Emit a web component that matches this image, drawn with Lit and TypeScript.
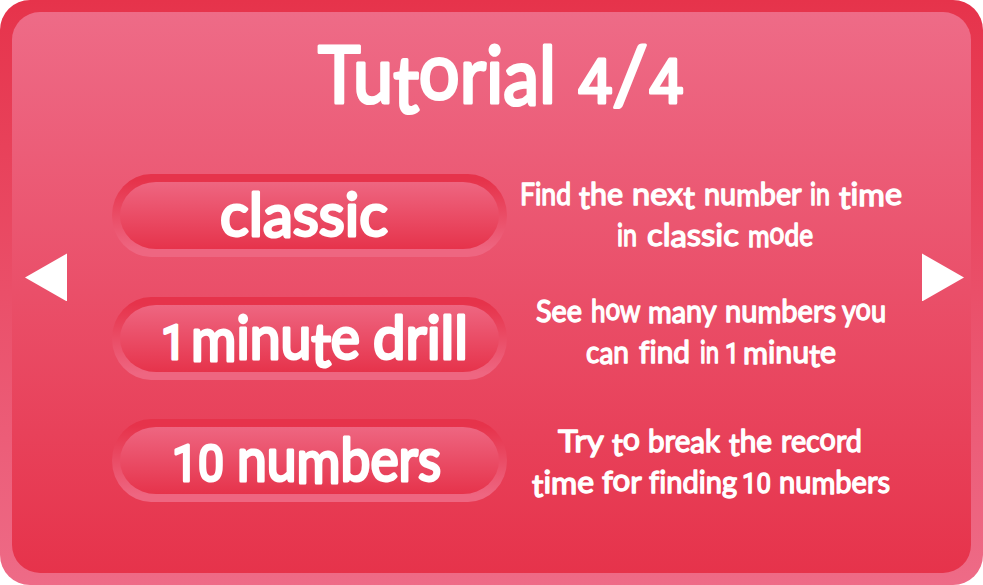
import { LitElement, html, svg, css } from "lit";
import { customElement, property } from "lit/decorators.js";

// One word: text, left edge, right edge, optional font size.
type Word = [string, number, number, number?];
interface Line { y: number; words: Word[]; }
interface Mode { label: Line; hint: Line[]; }

// Baseline offsets, in em, that give the lettering its uneven hand.
const OFFSETS: Record<string, number> = { t: 0.13, o: -0.05, a: 0.02, m: 0.03 };

function steps(word: string, size: number): string {
  let last = 0;
  return [...word].map((c) => {
    const now = (OFFSETS[c] ?? 0) * size;
    const d = now - last;
    last = now;
    return d.toFixed(2);
  }).join(" ");
}

@customElement("hand-lettering")
class HandLettering extends LitElement {
  @property({ attribute: false }) lines: Line[] = [];
  @property({ type: Number }) width = 100;
  @property({ type: Number }) height = 84;
  @property({ type: Number }) size = 33;
  @property({ type: Number }) weight = 1;

  static styles = css`
    :host { display: block; }
    .canvas { display: block; overflow: visible; }
    .line {
      font-family: Lato, "Open Sans", sans-serif;
      font-weight: 400;
      font-variant-ligatures: none;
      fill: #fff;
      stroke: #fff;
      stroke-linejoin: round;
      stroke-linecap: round;
    }
    .digit { font-family: Roboto, "Liberation Sans", sans-serif; }
  `;

  render() {
    return html`<svg class="canvas" width=${this.width} height=${this.height}>
      ${this.lines.map((l) => svg`<text class="line" font-size=${this.size} stroke-width=${this.weight}>${l.words.map(
        ([t, a, b, s], i) => svg`${i && t !== "/" && l.words[i - 1][0] !== "/" ? " " : ""}<tspan class=${/^\d/.test(t) ? "digit" : "word"} x=${a} y=${l.y} dy=${steps(t, this.size)} font-size=${s ?? this.size} textLength=${b - a} lengthAdjust="spacingAndGlyphs">${t}</tspan>`
      )}</text>`)}
    </svg>`;
  }
}

@customElement("app-root")
class AppRoot extends LitElement {
  static styles = css`
    :host { display: block; width: 983px; height: 585px; background: #fff; }
    .frame {
      box-sizing: border-box;
      width: 100%;
      height: 100%;
      padding: 12px;
      border-radius: 30px;
      background: linear-gradient(#e6334b, #ee6b87);
    }
    .panel {
      box-sizing: border-box;
      display: grid;
      grid-template-columns: 100px 1fr 49px;
      grid-template-rows: 162px 1fr;
      height: 100%;
      border-radius: 28px;
      background: linear-gradient(#ee6b87, #e6334b);
    }
    .title { grid-column: 1 / -1; margin: 0; font-weight: 400; }
    .nav {
      align-self: start;
      padding: 79px 0 0 13px;
      border: 0;
      background: none;
      display: block;
    }
    .nav.next { padding-left: 0; }
    .nav svg { display: block; }
    .modes { display: grid; grid-auto-rows: 84px; row-gap: 38.5px; align-content: start; }
    .mode { display: grid; grid-template-columns: 395px 1fr; column-gap: 8px; }
    .pill {
      box-sizing: border-box;
      display: block;
      height: 83px;
      padding: 8px;
      border: 0;
      border-radius: 39px / 41.5px;
      background: linear-gradient(#e6334b 8%, #ee6681 92%);
    }
    .face {
      display: block;
      height: 67px;
      border-radius: 36px / 33.5px;
      background: linear-gradient(#ee6681, #e6334b);
    }
  `;

  private heading: Line[] = [
    { y: 91, words: [["Tutorial", 306, 544], ["4", 566, 600, 61], ["/", 600, 636], ["4", 637, 671, 61]] },
  ];

  private modes: Mode[] = [
    {
      label: { y: 54, words: [["classic", 100, 268]] },
      hint: [
        { y: 31, words: [["Find", 5, 56], ["the", 64, 108], ["next", 117, 180], ["number", 189, 286], ["in", 295, 315], ["time", 324, 387]] },
        { y: 72, words: [["in", 102, 122], ["classic", 132, 224], ["mode", 233, 298]] },
      ],
    },
    {
      label: { y: 54, words: [["1", 41, 66, 48], ["minute", 71, 240], ["drill", 253, 348]] },
      hint: [
        { y: 25, words: [["See", 21, 67], ["how", 76, 125], ["many", 133, 201], ["numbers", 210, 321], ["you", 327, 371]] },
        { y: 66, words: [["can", 71, 114], ["find", 124, 175], ["in", 185, 204], ["1", 210, 224, 27], ["minute", 228, 321]] },
      ],
    },
    {
      label: { y: 54, words: [["10", 52, 104, 50], ["numbers", 117, 321]] },
      hint: [
        { y: 33, words: [["Try", 43, 88], ["to", 97, 125], ["break", 133, 205], ["the", 214, 257], ["record", 266, 347]] },
        { y: 74, words: [["time", 17, 79], ["for", 87, 126], ["finding", 134, 222], ["10", 227, 256, 28], ["numbers", 264, 375]] },
      ],
    },
  ];

  render() {
    return html`<main class="frame"><div class="panel">
      <h1 class="title"><hand-lettering .lines=${this.heading} .width=${959} .height=${150} .size=${80} .weight=${3.2}></hand-lettering></h1>
      <button class="nav" aria-label="Previous"><svg width="43" height="48"><path d="M0 24.5 42 .5V48.5Z" fill="#fff" /></svg></button>
      <div class="modes">
        ${this.modes.map((m) => html`<section class="mode">
          <div class="pill"><div class="face">
            <hand-lettering .lines=${[m.label]} .width=${379} .height=${67} .size=${60} .weight=${3}></hand-lettering>
          </div></div>
          <hand-lettering .lines=${m.hint} .width=${390} .size=${31} .weight=${1.4}></hand-lettering>
        </section>`)}
      </div>
      <button class="nav next" aria-label="Next"><svg width="43" height="48"><path d="M0 .5 42 24.5 0 48.5Z" fill="#fff" /></svg></button>
    </div></main>`;
  }
}
